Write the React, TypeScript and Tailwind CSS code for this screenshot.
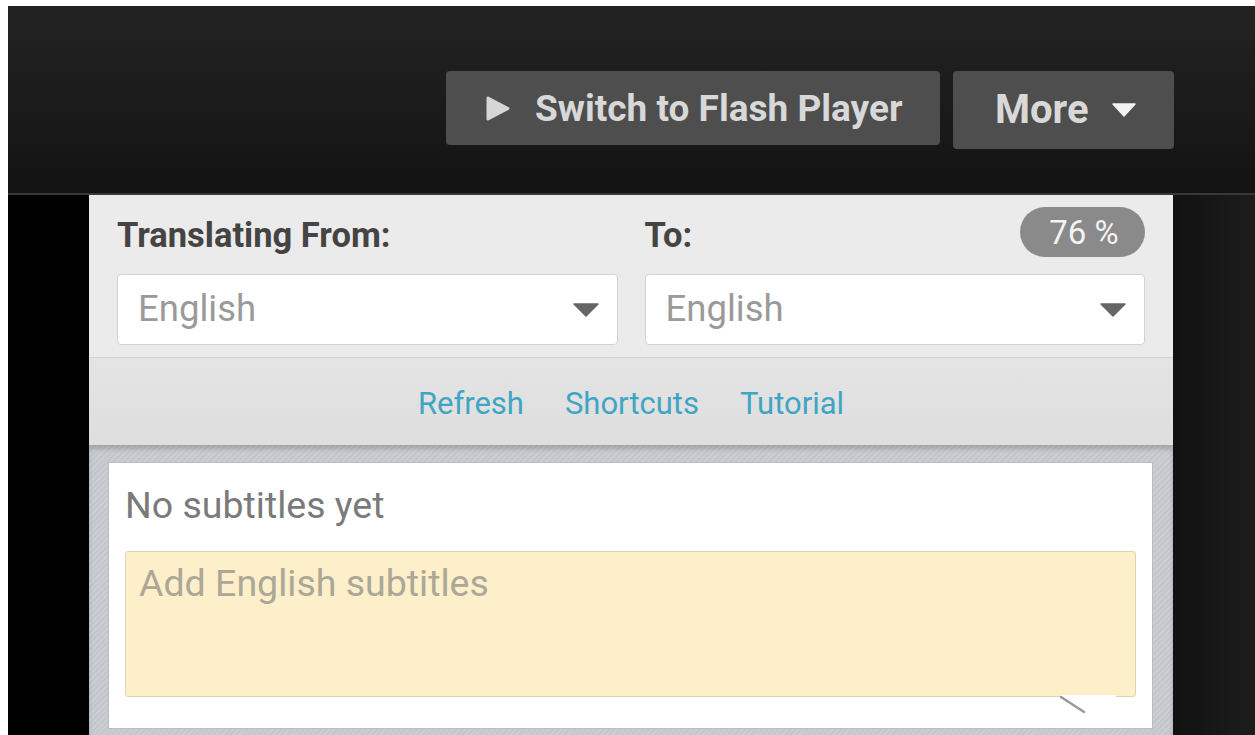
import { useState } from "react";

function PlayIcon() {
  return (
    <svg width="27" height="27" viewBox="0 0 27 27" className="shrink-0">
      <path d="M4 3 L24 13.5 L4 24 Z" fill="#d6d6d6" stroke="#d6d6d6" strokeWidth="3" strokeLinejoin="round" />
    </svg>
  );
}

function Caret({ color, w, h }: { color: string; w: number; h: number }) {
  return (
    <svg width={w} height={h} viewBox={`0 0 ${w} ${h}`} className="shrink-0">
      <path d={`M1 1 L${w - 1} 1 L${w / 2} ${h - 1} Z`} fill={color} stroke={color} strokeWidth="1.5" strokeLinejoin="round" />
    </svg>
  );
}

function LanguageSelect({ value }: { value: string }) {
  return (
    <div className="flex h-[71px] items-center justify-between rounded-[4px] border border-[#d2d2d2] bg-white pl-[20px] pr-[18px]">
      <span className="text-[36.5px] leading-none text-[#9a9a9a]">{value}</span>
      <Caret color="#666666" w={26} h={14} />
    </div>
  );
}

export default function App() {
  const [progress] = useState(76);
  const links = ["Refresh", "Shortcuts", "Tutorial"];

  return (
    <div className="h-[735px] w-[1255px] overflow-hidden bg-white pl-[8px] pt-[6px] font-['Roboto',sans-serif]">
      <div className="flex h-full flex-col">
        {/* player toolbar */}
        <div className="flex h-[189px] shrink-0 items-start justify-end gap-[13px] border-b-2 border-[#383838] bg-[linear-gradient(to_bottom,#232323,#131313)] pr-[81px] pt-[65px]">
          <button className="flex h-[74px] w-[494px] items-center gap-[24px] rounded-[4px] bg-[#4e4e4e] pl-[38px] text-[37px] font-bold text-[#d8d8d8]">
            <PlayIcon />
            <span className="leading-none">Switch to Flash Player</span>
          </button>
          <button className="flex h-[78px] w-[221px] items-center gap-[24px] rounded-[4px] bg-[#4e4e4e] pl-[42px] text-[40px] font-bold text-[#d8d8d8]">
            <span className="leading-none">More</span>
            <Caret color="#f2f2f2" w={24} h={14} />
          </button>
        </div>

        <div className="flex min-h-0 flex-1">
          <div className="w-[81px] shrink-0 bg-black" />

          {/* subtitle editor panel */}
          <div className="flex w-[1084px] shrink-0 flex-col">
            <div className="bg-[#ebebeb] px-[28px] pb-[12px] pt-[12px]">
              <div className="grid h-[50px] grid-cols-2 gap-[27px]">
                <div className="flex items-center pt-[6px] text-[34.5px] font-bold leading-[40px] text-[#444]">Translating From:</div>
                <div className="flex items-center justify-between">
                  <span className="pt-[6px] text-[34.5px] font-bold leading-[40px] text-[#444]">To:</span>
                  <span className="flex h-[50px] w-[125px] items-center justify-center rounded-full bg-[#8a8a8a] pl-[3px] text-[33px] leading-none text-[#f3f3f3]">
                    {progress} %
                  </span>
                </div>
              </div>
              <div className="mt-[17px] grid grid-cols-2 gap-[27px]">
                <LanguageSelect value="English" />
                <LanguageSelect value="English" />
              </div>
            </div>
            <div className="flex h-[88px] shrink-0 items-center justify-center gap-[41px] border-t border-[#d3d3d3] bg-[linear-gradient(to_bottom,#e4e4e4,#dedede)] pt-[3px] text-[31px] text-[#3fa5c4]">
              {links.map((l) => (
                <a key={l} className="leading-none">{l}</a>
              ))}
            </div>

            <div className="flex min-h-0 flex-1 flex-col bg-[repeating-linear-gradient(135deg,#c3c6ca_0px,#c3c6ca_2px,#cacdd1_2px,#cacdd1_4px)] pb-[6px] pl-[19px] pr-[20px] pt-[17px] shadow-[inset_0_4px_4px_rgba(0,0,0,0.18)]">
              <div className="flex flex-1 flex-col border border-[#b9bdc1] bg-white px-[16px] pt-[21px]">
                <div className="text-[37.5px] leading-[42px] text-[#7a7a7a]">No subtitles yet</div>
                <div className="relative mt-[25px] h-[146px] rounded-[3px] border border-[#ddd3b6] bg-[#fdefc9] px-[13px] pt-[10px]">
                  <div className="text-[37.5px] leading-[42px] text-[#aca796]">Add English subtitles</div>
                  {/* speech bubble tail */}
                  <svg width="56" height="20" viewBox="0 0 56 20" className="absolute bottom-[-19px] right-[19px]">
                    <polygon points="0,0 56,0 56,3 25,17" fill="#ffffff" />
                    <line x1="1" y1="2" x2="24" y2="17" stroke="#9a9a9a" strokeWidth="2.5" strokeLinecap="round" />
                  </svg>
                </div>
              </div>
            </div>
          </div>

          <div className="flex-1 bg-[linear-gradient(to_right,#111111,#1d1d1d)]" />
        </div>
      </div>
    </div>
  );
}
